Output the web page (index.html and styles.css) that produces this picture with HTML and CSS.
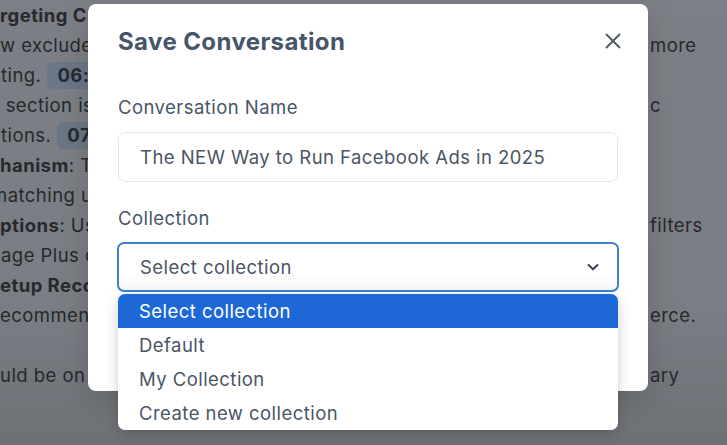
FILE: index.html
```html
<!DOCTYPE html>
<html>
<head>
<meta charset="utf-8">
<link rel="stylesheet" href="styles.css">
</head>
<body>
<div class="page">
  <div class="line"><span class="l"><b>rgeting Changes</b></span></div>
  <div class="line"><span class="l">w excluded audiences are now applied to every campaign for</span><span class="r">more</span></div>
  <div class="line"><span class="l"><span class="lead">ting.</span><span class="badge">06:24</span></span></div>
  <div class="line"><span class="l">&nbsp;section is where you set the new options for your specifi</span><span class="r">c</span></div>
  <div class="line"><span class="l"><span class="lead">tions.</span><span class="badge">07:10</span></span></div>
  <div class="line"><span class="l"><b>hanism</b>: The system works by matching users</span></div>
  <div class="line"><span class="l"><span class="cut">m</span>atching users to the right audience segments</span></div>
  <div class="line"><span class="l"><b>ptions</b>: Use the new advanced audience controls and</span><span class="r">filters</span></div>
  <div class="line"><span class="l"><span class="lead">age Plus campaigns to manage the results</span></span></div>
  <div class="line"><span class="l"><b>etup Recommendations</b></span></div>
  <div class="line"><span class="l">ecommended for brands that sell through e-comm</span><span class="r">erce.</span></div>
  <div class="line"><span class="l">&nbsp;</span></div>
  <div class="line"><span class="l">uld be on the lookout for the new placements in the libr</span><span class="r">ary</span></div>
</div>

<div class="modal">
  <div class="modal-head">
    <h2 class="title">Save Conversation</h2>
    <svg class="close" width="18" height="18" viewBox="0 0 18 18"><path d="M2.5 2.5 L15.5 15.5 M15.5 2.5 L2.5 15.5" stroke="#4b5563" stroke-width="1.8" stroke-linecap="round"/></svg>
  </div>
  <div class="field">
    <div class="label">Conversation Name</div>
    <div class="input">The NEW Way to Run Facebook Ads in 2025</div>
  </div>
  <div class="field second">
    <div class="label">Collection</div>
    <div class="select-wrap">
      <div class="select">
        <span>Select collection</span>
        <svg width="14" height="10" viewBox="0 0 14 10"><path d="M2.5 3 L7 7.2 L11.5 3" fill="none" stroke="#374151" stroke-width="2" stroke-linecap="round" stroke-linejoin="round"/></svg>
      </div>
      <div class="dropdown">
        <div class="opt active">Select collection</div>
        <div class="opt">Default</div>
        <div class="opt">My Collection</div>
        <div class="opt">Create new collection</div>
      </div>
    </div>
  </div>
</div>
</body>
</html>
```

FILE: styles.css
```css
html, body {
  margin: 0;
  padding: 0;
}
body {
  width: 727px;
  height: 445px;
  overflow: hidden;
  background: linear-gradient(#7c7f85 0%, #7a7d83 70%, #6d7075 100%);
  font-family: Inter, "Noto Sans", sans-serif;
  letter-spacing: 0.45px;
  position: relative;
}
.page {
  color: #26292e;
  font-size: 18.5px;
}
.line {
  display: flex;
  height: 30px;
  align-items: center;
  white-space: nowrap;
}
.line .l {
  width: 650px;
  overflow: hidden;
  flex: none;
}
.line .r {
  flex: none;
}
.lead {
  padding-left: 1px;
}
.cut {
  display: inline-block;
  margin-left: -9px;
}
.badge {
  display: inline-block;
  margin-left: 6px;
  background: #6b7686;
  color: #252a33;
  font-weight: 700;
  padding: 2px 10px;
  border-radius: 6px;
  line-height: 23px;
}
.modal {
  position: absolute;
  left: 88px;
  top: 4px;
  width: 560px;
  height: 387px;
  box-sizing: border-box;
  background: #fff;
  border-radius: 8px;
  padding: 23px 30px 0 30px;
  box-shadow: 0 8px 30px rgba(0,0,0,0.15);
}
.modal-head {
  display: flex;
  justify-content: space-between;
  align-items: flex-start;
}
.title {
  margin: 0;
  font-size: 24px;
  line-height: 30px;
  font-weight: 700;
  color: #475569;
  letter-spacing: 0.4px;
}
.close {
  margin-top: 5px;
  margin-right: -4px;
}
.field {
  margin-top: 38px;
}
.field.second {
  margin-top: 24px;
}
.label {
  font-size: 18.5px;
  line-height: 24px;
  color: #475569;
}
.input {
  margin-top: 13px;
  height: 50px;
  box-sizing: border-box;
  border: 1px solid #e5e7eb;
  border-radius: 7px;
  padding: 0 21px;
  display: flex;
  align-items: center;
  font-size: 18.5px;
  color: #4b5563;
}
.select-wrap {
  position: relative;
  margin-top: 12px;
  margin-left: -1px;
  margin-right: -1px;
}
.select {
  height: 50px;
  box-sizing: border-box;
  border: 2px solid #3f7fd0;
  border-radius: 7px;
  padding: 0 17px 0 21px;
  display: flex;
  align-items: center;
  justify-content: space-between;
  font-size: 18.5px;
  color: #4b5563;
  background: linear-gradient(#fff 60%, #f6f6f7);
}
.dropdown {
  position: absolute;
  left: 1px;
  right: 1px;
  top: 52px;
  background: #fff;
  border-radius: 7px;
  overflow: hidden;
  box-shadow: 0 4px 14px rgba(0,0,0,0.18), 0 0 1px rgba(0,0,0,0.2);
}
.opt {
  height: 34px;
  padding-left: 21px;
  display: flex;
  align-items: center;
  font-size: 18.5px;
  color: #4b5563;
}
.opt.active {
  background: #1d68d6;
  color: #fff;
}
```
